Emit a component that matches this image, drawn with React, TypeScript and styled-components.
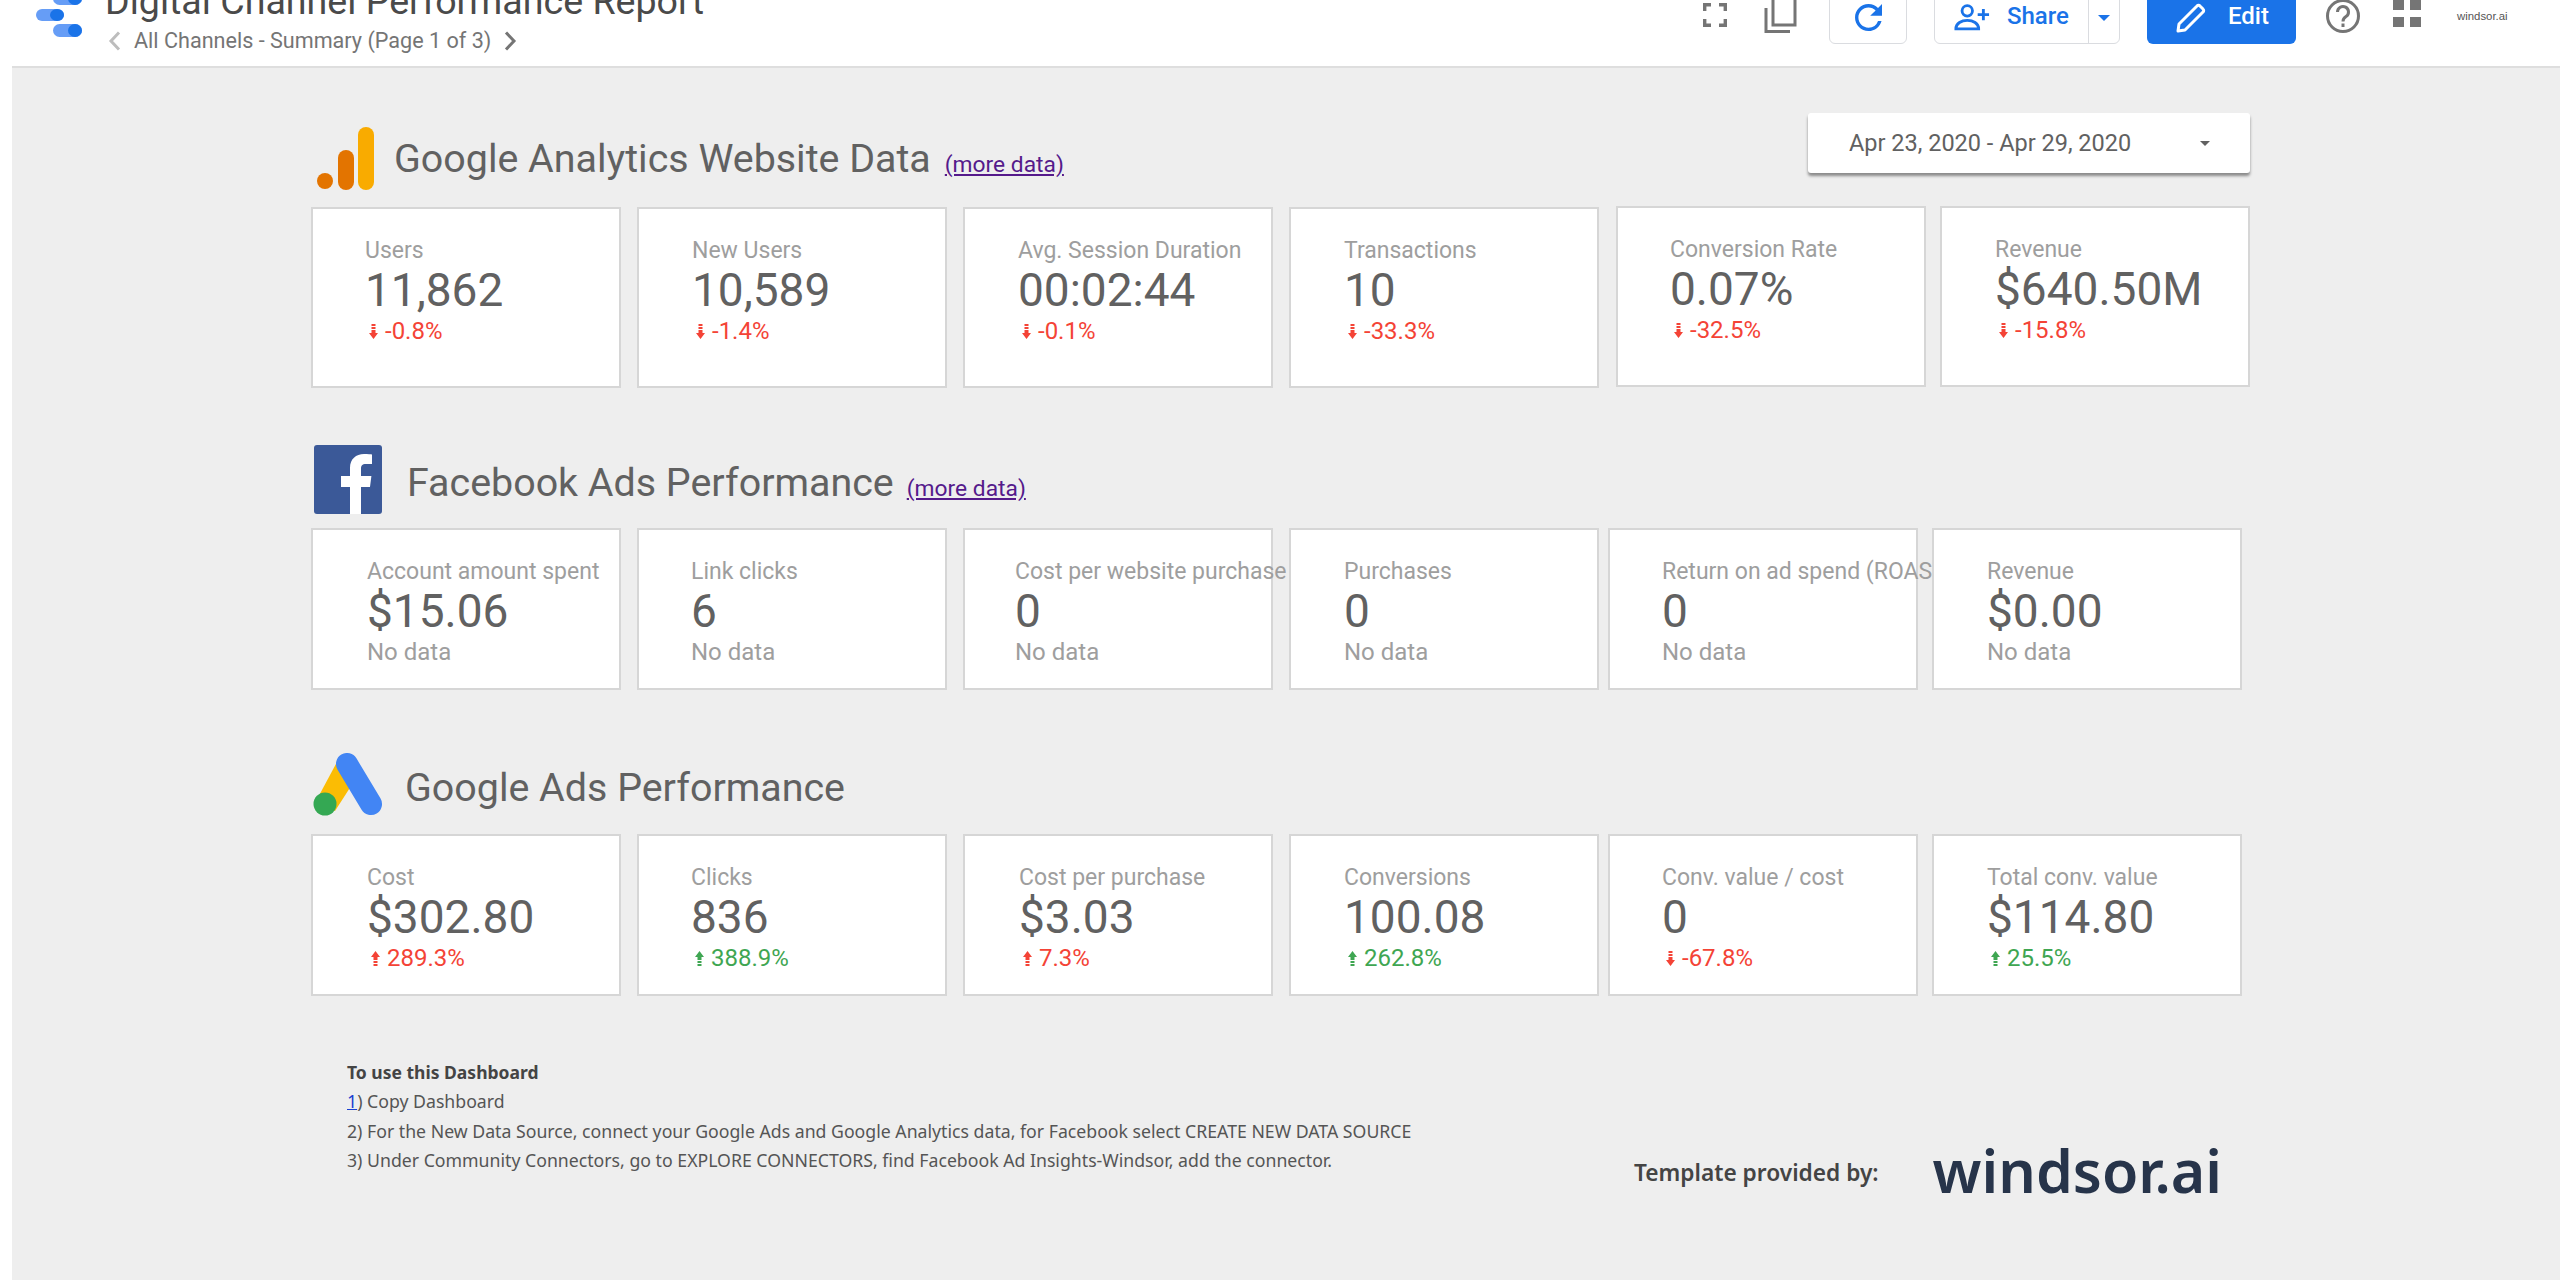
import styled, { createGlobalStyle } from "styled-components";

const GlobalStyle = createGlobalStyle`
    html, body {
        margin: 0;
        padding: 0;
        background-color: #ffffff;
        font-family: Roboto, "Liberation Sans", sans-serif;
    }
`;

const Page = styled.div`
    width: 2560px;
    height: 1280px;
    overflow: hidden;
    background-color: #ffffff;
`;

const TopBar = styled.header`
    height: 66px;
    display: flex;
    justify-content: space-between;
    overflow: hidden;
`;

const TitleArea = styled.div`
    display: flex;
    align-items: flex-start;
`;

const AppLogo = styled.svg`
    width: 50px;
    height: 50px;
    margin: -10px 0 0 34px;
    flex: none;
`;

const TitleText = styled.div`
    margin: -21px 0 0 21px;
`;

const ReportTitle = styled.div`
    font-size: 37.6px;
    line-height: 44px;
    color: #4a4a4a;
    white-space: nowrap;
`;

const PageNav = styled.div`
    display: flex;
    align-items: center;
    gap: 12px;
    margin: 5px 0 0 3px;
    font-size: 21.6px;
    line-height: 26px;
    color: #757575;
`;

const Actions = styled.div`
    display: flex;
    align-items: flex-start;
`;

const ActionIcon = styled.svg<{ $gap: number; $top?: number }>`
    display: block;
    flex: none;
    margin-left: ${({ $gap }) => $gap}px;
    margin-top: ${({ $top }) => $top ?? 0}px;
`;

const OutlineButton = styled.div<{ $gap: number; $width: number }>`
    width: ${({ $width }) => $width}px;
    height: 53px;
    margin-top: -9px;
    margin-left: ${({ $gap }) => $gap}px;
    border: 1px solid #dadce0;
    border-radius: 6px;
    display: flex;
    align-items: center;
    color: #1a73e8;
    font-size: 24px;
    font-weight: 500;
    box-sizing: border-box;
    background: #fff;
`;

const RefreshButton = styled(OutlineButton)`
    justify-content: center;
`;

const ShareMain = styled.div`
    width: 154px;
    height: 100%;
    display: flex;
    align-items: center;
    gap: 17px;
    padding-left: 19px;
    box-sizing: border-box;
    border-right: 1px solid #dadce0;
`;

const ButtonLabel = styled.span`
    margin-bottom: 3px;
`;

const ShareCaret = styled.div`
    flex: 1;
    display: flex;
    justify-content: center;
`;

const Triangle = styled.span<{ $color: string; $size: number }>`
    width: 0;
    height: 0;
    border-left: ${({ $size }) => $size}px solid transparent;
    border-right: ${({ $size }) => $size}px solid transparent;
    border-top: ${({ $size }) => $size}px solid ${({ $color }) => $color};
`;

const EditButton = styled.div`
    width: 149px;
    height: 53px;
    margin-top: -9px;
    margin-left: 27px;
    border-radius: 6px;
    background-color: #1a73e8;
    color: #ffffff;
    font-size: 24px;
    font-weight: 500;
    display: flex;
    align-items: center;
    gap: 22px;
    padding-left: 29px;
    box-sizing: border-box;
`;

const SmallBrand = styled.div`
    margin: 9px 53px 0 36px;
    width: 50px;
    font-family: "Liberation Sans", sans-serif;
    font-size: 11.4px;
    line-height: 14px;
    color: #555;
`;

const Canvas = styled.main`
    margin-left: 12px;
    height: 1214px;
    box-sizing: border-box;
    border-top: 2px solid #dedede;
    background-color: #eeeeee;
    padding: 45px 0 0 299px;
`;

const SectionHead = styled.div<{ $height: number; $indent: number }>`
    height: ${({ $height }) => $height}px;
    width: 1939px;
    display: flex;
    align-items: flex-start;
    padding-left: ${({ $indent }) => $indent}px;
    box-sizing: border-box;
`;

const SectionLogo = styled.svg<{ $top: number }>`
    flex: none;
    display: block;
    margin-top: ${({ $top }) => $top}px;
`;

const SectionTitle = styled.h2<{ $top: number; $gap: number }>`
    margin: ${({ $top }) => $top}px 0 0 ${({ $gap }) => $gap}px;
    font-size: 39.4px;
    line-height: 48px;
    font-weight: 400;
    color: #616161;
    white-space: nowrap;
`;

const MoreLink = styled.a<{ $top: number; $gap: number }>`
    margin: ${({ $top }) => $top}px 0 0 ${({ $gap }) => $gap}px;
    font-size: 22.8px;
    line-height: 28px;
    color: #551a8b;
    text-decoration: underline;
    white-space: nowrap;
`;

const DateControl = styled.div`
    margin-left: auto;
    width: 442px;
    height: 60px;
    box-sizing: border-box;
    background-color: #ffffff;
    border-radius: 3px;
    box-shadow: 0 3px 3px rgba(0, 0, 0, 0.42);
    display: flex;
    align-items: center;
    justify-content: space-between;
    padding: 0 40px 0 41px;
    font-size: 23.5px;
    color: #616161;
    white-space: nowrap;
`;

const CardRow = styled.div`
    display: flex;
    align-items: flex-start;
`;

const Card = styled.div<{ $height: number; $gap: number; $top?: number; $pad: number }>`
    position: relative;
    flex: none;
    width: 310px;
    height: ${({ $height }) => $height}px;
    margin-left: ${({ $gap }) => $gap}px;
    margin-top: ${({ $top }) => $top ?? 0}px;
    padding: 28px 0 0 ${({ $pad }) => $pad}px;
    box-sizing: border-box;
    background-color: #ffffff;
    border: 2px solid #d6d6d6;
`;

const CardLabel = styled.div`
    font-size: 23px;
    line-height: 27px;
    color: #9e9e9e;
    white-space: nowrap;
`;

const CardValue = styled.div`
    font-size: 46px;
    line-height: 52px;
    color: #616161;
    white-space: nowrap;
`;

const CardDelta = styled.div<{ $tone: "up" | "down" | "none" }>`
    display: flex;
    align-items: center;
    gap: 7px;
    margin-top: 1px;
    font-size: 24px;
    line-height: 28px;
    white-space: nowrap;
    color: ${({ $tone }) =>
        $tone === "down" ? "#f44336" : $tone === "up" ? "#3fa652" : "#9e9e9e"};

    svg {
        margin-left: 4px;
    }
`;

const Footer = styled.div`
    display: flex;
    align-items: flex-start;
    justify-content: space-between;
    width: 1875px;
    margin: 62px 0 0 36px;
`;

const Notes = styled.div`
    font-family: "Noto Sans", sans-serif;
    font-size: 17.7px;
    line-height: 29.3px;
    color: #555555;
    white-space: nowrap;
`;

const NotesTitle = styled.div`
    font-size: 17.5px;
    font-weight: 700;
    color: #444444;
`;

const NoteLink = styled.a`
    color: #1a3fd0;
    text-decoration: underline;
`;

const Credit = styled.div`
    display: flex;
    align-items: center;
    margin-top: 82px;
`;

const CreditText = styled.div`
    margin-top: 5px;
    font-family: "Noto Sans", sans-serif;
    font-size: 22.7px;
    font-weight: 600;
    color: #444444;
    white-space: nowrap;
`;

const WindsorMark = styled.div`
    margin-left: 54px;
    font-family: "Noto Sans", sans-serif;
    font-size: 59px;
    line-height: 60px;
    font-weight: 600;
    color: #27344a;
    white-space: nowrap;
`;

type Metric = {
    label: string;
    value: string;
    delta?: string;
    tone?: "up" | "down" | "none";
    dir?: "up" | "down";
    gap: number;
    pad: number;
    top?: number;
};

const analytics: Metric[] = [
    { label: "Users", value: "11,862", delta: "-0.8%", tone: "down", dir: "down", gap: 0, pad: 52 },
    { label: "New Users", value: "10,589", delta: "-1.4%", tone: "down", dir: "down", gap: 16, pad: 53 },
    { label: "Avg. Session Duration", value: "00:02:44", delta: "-0.1%", tone: "down", dir: "down", gap: 16, pad: 53 },
    { label: "Transactions", value: "10", delta: "-33.3%", tone: "down", dir: "down", gap: 16, pad: 53 },
    { label: "Conversion Rate", value: "0.07%", delta: "-32.5%", tone: "down", dir: "down", gap: 17, pad: 52, top: -1 },
    { label: "Revenue", value: "$640.50M", delta: "-15.8%", tone: "down", dir: "down", gap: 14, pad: 53, top: -1 },
];

const facebook: Metric[] = [
    { label: "Account amount spent", value: "$15.06", delta: "No data", gap: 0, pad: 54 },
    { label: "Link clicks", value: "6", delta: "No data", gap: 16, pad: 52 },
    { label: "Cost per website purchase", value: "0", delta: "No data", gap: 16, pad: 50 },
    { label: "Purchases", value: "0", delta: "No data", gap: 16, pad: 53 },
    { label: "Return on ad spend (ROAS)", value: "0", delta: "No data", gap: 9, pad: 52 },
    { label: "Revenue", value: "$0.00", delta: "No data", gap: 14, pad: 53 },
];

const googleAds: Metric[] = [
    { label: "Cost", value: "$302.80", delta: "289.3%", tone: "down", dir: "up", gap: 0, pad: 54 },
    { label: "Clicks", value: "836", delta: "388.9%", tone: "up", dir: "up", gap: 16, pad: 52 },
    { label: "Cost per purchase", value: "$3.03", delta: "7.3%", tone: "down", dir: "up", gap: 16, pad: 54 },
    { label: "Conversions", value: "100.08", delta: "262.8%", tone: "up", dir: "up", gap: 16, pad: 53 },
    { label: "Conv. value / cost", value: "0", delta: "-67.8%", tone: "down", dir: "down", gap: 9, pad: 52 },
    { label: "Total conv. value", value: "$114.80", delta: "25.5%", tone: "up", dir: "up", gap: 14, pad: 53 },
];

function TrendArrow({ dir }: { dir: "up" | "down" }) {
    return (
        <svg width="9" height="15" viewBox="0 0 9 15" fill="currentColor">
            {dir === "down" ? (
                <path d="M2.500 0h4v2h-4zM2.500 3h4v2h-4zM2.500 6h4v3H9l-4.500 6L0 9h2.500z" />
            ) : (
                <path d="M2.500 15h4v-2h-4zM2.500 12h4v-2h-4zM2.500 9h4V6H9L4.500 0 0 6h2.500z" />
            )}
        </svg>
    );
}

function MetricRow({ items, height }: { items: Metric[]; height: number }) {
    return (
        <CardRow>
            {items.map((m) => (
                <Card key={m.label} $height={height} $gap={m.gap} $pad={m.pad} $top={m.top}>
                    <CardLabel>{m.label}</CardLabel>
                    <CardValue>{m.value}</CardValue>
                    <CardDelta $tone={m.tone ?? "none"}>
                        {m.dir && <TrendArrow dir={m.dir} />}
                        {m.delta}
                    </CardDelta>
                </Card>
            ))}
        </CardRow>
    );
}

function App() {
    return (
        <Page>
            <GlobalStyle />
            <TopBar>
                <TitleArea>
                    <AppLogo viewBox="0 0 50 50">
                        <rect x="19" y="2" width="29" height="13" rx="6.5" fill="#669df6" />
                        <ellipse cx="41" cy="8.5" rx="7" ry="6.5" fill="#1a73e8" />
                        <rect x="2" y="19" width="28" height="12" rx="6" fill="#669df6" />
                        <ellipse cx="23" cy="25" rx="7" ry="6" fill="#1a73e8" />
                        <rect x="19" y="34" width="29" height="13" rx="6.5" fill="#669df6" />
                        <ellipse cx="41" cy="40.5" rx="7" ry="6.5" fill="#1a73e8" />
                    </AppLogo>
                    <TitleText>
                        <ReportTitle>Digital Channel Performance Report</ReportTitle>
                        <PageNav>
                            <svg width="14" height="20" viewBox="0 0 14 20" fill="none" stroke="#bdbdbd" strokeWidth="3">
                                <path d="M11 1.500 3 10l8 8.500" />
                            </svg>
                            <span>All Channels - Summary (Page 1 of 3)</span>
                            <svg width="14" height="20" viewBox="0 0 14 20" fill="none" stroke="#757575" strokeWidth="3">
                                <path d="m3 1.500 8 8.500-8 8.500" />
                            </svg>
                        </PageNav>
                    </TitleText>
                </TitleArea>
                <Actions>
                    <ActionIcon $gap={0} $top={3} width="24" height="24" viewBox="0 0 24 24" fill="none" stroke="#757575" strokeWidth="3.4">
                        <path d="M1.700 8V1.700H8M16 1.700h6.300V8M22.300 16v6.300H16M8 22.300H1.700V16" />
                    </ActionIcon>
                    <ActionIcon $gap={37} width="34" height="34" viewBox="0 0 34 34" fill="none" stroke="#757575" strokeWidth="3">
                        <path d="M9-4h22v29H9zM2 8v23.500h24" />
                    </ActionIcon>
                    <RefreshButton $gap={31} $width={78}>
                        <svg width="27" height="27" viewBox="4 4 16 16" fill="#1a73e8">
                            <path d="M17.650 6.350A7.958 7.958 0 0 0 12 4c-4.420 0-7.990 3.580-7.990 8s3.570 8 7.990 8c3.730 0 6.840-2.550 7.730-6h-2.080A5.990 5.990 0 0 1 12 18c-3.310 0-6-2.690-6-6s2.690-6 6-6c1.660 0 3.140.69 4.220 1.780L13 11h7V4l-2.350 2.350z" />
                        </svg>
                    </RefreshButton>
                    <OutlineButton $gap={27} $width={186}>
                        <ShareMain>
                            <svg width="36" height="27" viewBox="0 0 38 28" fill="none" stroke="#1a73e8" strokeWidth="3">
                                <circle cx="14" cy="7" r="5.500" />
                                <path d="M2 26c0-6 6-9 12-9s12 3 12 9z" />
                                <path d="M31 5v12M25 11h12" />
                            </svg>
                            <ButtonLabel>Share</ButtonLabel>
                        </ShareMain>
                        <ShareCaret>
                            <Triangle $color="#1a73e8" $size={6} />
                        </ShareCaret>
                    </OutlineButton>
                    <EditButton>
                        <svg width="30" height="30" viewBox="0 0 30 30" fill="none" stroke="#ffffff" strokeWidth="3" strokeLinejoin="round">
                            <path d="M2 28l1-7L21 3a2 2 0 0 1 3 0l3 3a2 2 0 0 1 0 3L9 27z" />
                        </svg>
                        <ButtonLabel>Edit</ButtonLabel>
                    </EditButton>
                    <ActionIcon $gap={29} $top={-2} width="36" height="36" viewBox="0 0 36 36" fill="none" stroke="#757575" strokeWidth="3">
                        <circle cx="18" cy="18" r="15.500" />
                        <path d="M12.500 14a5.500 5.500 0 1 1 8.500 4.600c-2 1.300-3 2.200-3 4.900" />
                        <path d="M18 25.500v3.500" />
                    </ActionIcon>
                    <ActionIcon $gap={32} width="28" height="28" viewBox="0 0 28 28" fill="#757575">
                        <rect x="0" y="0" width="11" height="10" />
                        <rect x="17" y="0" width="11" height="10" />
                        <rect x="0" y="17" width="11" height="10" />
                        <rect x="17" y="17" width="11" height="10" />
                    </ActionIcon>
                    <SmallBrand>windsor.ai</SmallBrand>
                </Actions>
            </TopBar>
            <Canvas>
                <section>
                    <SectionHead $height={94} $indent={6}>
                        <SectionLogo $top={14} width="58" height="63" viewBox="0 0 58 63">
                            <circle cx="8" cy="54" r="8" fill="#e37400" />
                            <rect x="21" y="23" width="16" height="40" rx="8" fill="#e37400" />
                            <rect x="41" y="0" width="16" height="63" rx="8" fill="#f9ab00" />
                        </SectionLogo>
                        <SectionTitle $top={22} $gap={19}>Google Analytics Website Data</SectionTitle>
                        <MoreLink $top={38} $gap={14}>(more data)</MoreLink>
                        <DateControl>
                            Apr 23, 2020 - Apr 29, 2020
                            <Triangle $color="#616161" $size={5} />
                        </DateControl>
                    </SectionHead>
                    <MetricRow items={analytics} height={181} />
                </section>
                <section>
                    <SectionHead $height={140} $indent={3}>
                        <SectionLogo $top={57} width="68" height="69" viewBox="0 0 68 69">
                            <rect width="68" height="69" rx="3" fill="#3b5998" />
                            <path d="M47 69V42h9l1.400-11H47v-7c0-3.200 1-5 5-5h6V9.500C57 9.300 53.800 9 50 9c-8 0-14 5-14 14v8h-9v11h9v27z" fill="#ffffff" />
                        </SectionLogo>
                        <SectionTitle $top={71} $gap={25}>Facebook Ads Performance</SectionTitle>
                        <MoreLink $top={87} $gap={13}>(more data)</MoreLink>
                    </SectionHead>
                    <MetricRow items={facebook} height={162} />
                </section>
                <section>
                    <SectionHead $height={144} $indent={2}>
                        <SectionLogo $top={63} width="70" height="63" viewBox="0 0 70 63">
                            <path d="M24 9 2 50l20 8 18-28z" fill="#fbbc04" />
                            <path d="M34 11 58 51" stroke="#4285f4" strokeWidth="22" strokeLinecap="round" fill="none" />
                            <circle cx="12" cy="51" r="11.500" fill="#34a853" />
                        </SectionLogo>
                        <SectionTitle $top={74} $gap={22}>Google Ads Performance</SectionTitle>
                    </SectionHead>
                    <MetricRow items={googleAds} height={162} />
                </section>
                <Footer>
                    <Notes>
                        <NotesTitle>To use this Dashboard</NotesTitle>
                        <div><NoteLink>1</NoteLink>) Copy Dashboard</div>
                        <div>2) For the New Data Source, connect your Google Ads and Google Analytics data, for Facebook select CREATE NEW DATA SOURCE</div>
                        <div>3) Under Community Connectors, go to EXPLORE CONNECTORS, find Facebook Ad Insights-Windsor, add the connector.</div>
                    </Notes>
                    <Credit>
                        <CreditText>Template provided by:</CreditText>
                        <WindsorMark>windsor.ai</WindsorMark>
                    </Credit>
                </Footer>
            </Canvas>
        </Page>
    );
}

export default App;
